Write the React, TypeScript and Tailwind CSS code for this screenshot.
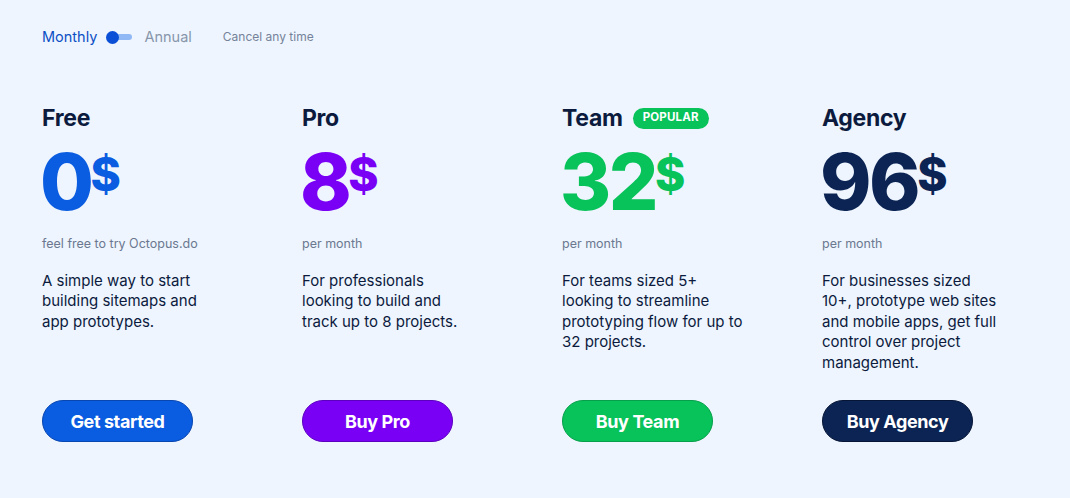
import React from "react";

type Plan = {
  name: string;
  price: string;
  sub: string;
  desc: string[];
  cta: string;
  color: string;
  btn: string;
  popular?: boolean;
};

const plans: Plan[] = [
  {
    name: "Free",
    price: "0",
    sub: "feel free to try Octopus.do",
    desc: ["A simple way to start", "building sitemaps and", "app prototypes."],
    cta: "Get started",
    color: "text-[#0a5ce0]",
    btn: "bg-[#0a5ce0] border-[#0846b0]",
  },
  {
    name: "Pro",
    price: "8",
    sub: "per month",
    desc: ["For professionals", "looking to build and", "track up to 8 projects."],
    cta: "Buy Pro",
    color: "text-[#7a00f5]",
    btn: "bg-[#7a00f5] border-[#5c00c0]",
  },
  {
    name: "Team",
    price: "32",
    sub: "per month",
    desc: ["For teams sized 5+", "looking to streamline", "prototyping flow for up to", "32 projects."],
    cta: "Buy Team",
    color: "text-[#08c25a]",
    btn: "bg-[#08c25a] border-[#06a04a]",
    popular: true,
  },
  {
    name: "Agency",
    price: "96",
    sub: "per month",
    desc: ["For businesses sized", "10+, prototype web sites", "and mobile apps, get full", "control over project", "management."],
    cta: "Buy Agency",
    color: "text-[#0b2454]",
    btn: "bg-[#0b2454] border-[#061536]",
  },
];

export default function App() {
  return (
    <div className="min-h-[498px] w-full bg-[#eef5fe] pl-[42px] pt-[27px] font-['Inter','Liberation_Sans',sans-serif] text-[#0b1a3d]">
      <div className="flex h-[20px] items-center">
        <span className="text-[14.5px] text-[#0b4fc5]">Monthly</span>
        <div className="relative ml-[9px] h-[14px] w-[27px]">
          <div className="absolute left-[6px] top-[4px] h-[6px] w-[20px] rounded-full bg-[#8fb8f5]" />
          <div className="absolute left-0 top-[1px] h-[13px] w-[13px] rounded-full bg-[#0a4fd6]" />
        </div>
        <span className="ml-[11px] text-[14.5px] text-[#8796ab]">Annual</span>
        <span className="ml-[31px] text-[12px] text-[#75839a]">Cancel any time</span>
      </div>

      <div className="mt-[57px] flex">
        {plans.map((p) => (
          <div key={p.name} className="flex h-[338px] w-[260px] shrink-0 flex-col">
            <div className="flex h-[28px] items-center">
              <span className="text-[23px] font-bold tracking-[-0.3px] text-[#0b1a3d]">{p.name}</span>
              {p.popular && (
                <span className="ml-[10px] flex h-[21px] items-center rounded-full bg-[#08c25a] px-[10px] text-[11.5px] font-bold tracking-[0.2px] text-white">
                  POPULAR
                </span>
              )}
            </div>
            <div className={`mt-[15px] flex h-[70px] items-start ${p.color}`}>
              <span className="-ml-[2px] text-[78px] font-extrabold leading-[70px] tracking-[-2.5px]">{p.price}</span>
              <span className="-ml-[1px] mt-[4px] text-[46px] font-extrabold leading-[46px]">$</span>
            </div>
            <div className="mt-[18px] text-[12.5px] text-[#6b7890]">{p.sub}</div>
            <p className="mt-[17px] whitespace-nowrap text-[15px] leading-[20.5px] text-[#0b1a3d]">
              {p.desc.map((l, i) => (
                <React.Fragment key={i}>
                  {l}
                  {i < p.desc.length - 1 && <br />}
                </React.Fragment>
              ))}
            </p>
            <button
              className={`mt-auto h-[42px] w-[151px] rounded-full border text-[18px] font-bold tracking-[-0.4px] text-white ${p.btn}`}
            >
              {p.cta}
            </button>
          </div>
        ))}
      </div>
    </div>
  );
}
